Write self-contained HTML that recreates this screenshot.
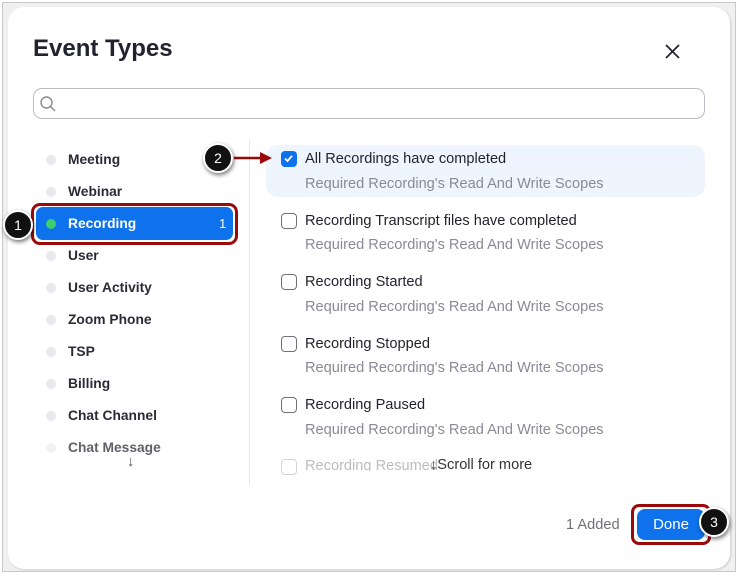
<!DOCTYPE html>
<html><head><style>
*{margin:0;padding:0;box-sizing:border-box}
body{width:738px;height:574px;background:#fff;font-family:"Liberation Sans",sans-serif;position:relative;overflow:hidden}
.frame{position:absolute;left:2px;top:2px;width:734px;height:570px;border:1px solid #c8c8c8;background:#f0f0f0}
.dlg{position:absolute;left:8px;top:7px;width:722px;height:562px;background:#fff;border-radius:16px;box-shadow:1px 1px 2px rgba(0,0,0,.15)}
.abs{position:absolute}
.title{left:33px;top:35px;font-size:24px;font-weight:bold;color:#23232f}
.search{left:33px;top:88px;width:672px;height:31px;border:1px solid #babac4;border-radius:9px}
.li{position:absolute;left:68px;font-size:13.8px;font-weight:bold;color:#2b2b36}
.dot{position:absolute;left:46px;width:10px;height:10px;border-radius:50%;background:#e8e8ed}
.sel{left:36px;top:207px;width:197px;height:33px;background:#0e72ed;border-radius:7px}
.selo{left:31px;top:203px;width:207px;height:42px;border:3px solid #9b0a0a;border-radius:9px}
.div{left:249px;top:140px;width:1px;height:345px;background:#e5e5ea}
.hl{left:266px;top:145px;width:439px;height:52px;background:#eef5fe;border-radius:12px}
.cb{position:absolute;left:281px;width:16px;height:16px;border:1.5px solid #70707c;border-radius:4px;background:#fff}
.t1{position:absolute;left:305px;font-size:14.6px;color:#23232f}
.t2{position:absolute;left:305px;font-size:14.6px;color:#8a8a97}
.call{position:absolute;width:30px;height:30px;border-radius:50%;background:#111;border:2px solid #fff;box-shadow:1px 2px 4px rgba(0,0,0,.55);color:#fff;font-size:14px;text-align:center;line-height:26px}
</style></head><body>
<div class="frame"></div>
<div class="dlg"></div>
<div class="abs title">Event Types</div>
<svg class="abs" style="left:664px;top:43px" width="17" height="17" viewBox="0 0 17 17"><path d="M2 2L15 15M15 2L2 15" stroke="#23232f" stroke-width="1.8"/></svg>
<div class="abs search"></div>
<svg class="abs" style="left:39px;top:95px" width="18" height="18" viewBox="0 0 18 18"><circle cx="7.5" cy="7.5" r="5.5" fill="none" stroke="#8a8a97" stroke-width="1.4"/><path d="M11.5 11.5L16 16" stroke="#8a8a97" stroke-width="1.4"/></svg>

<div class="dot" style="top:155px"></div><div class="li" style="top:152px">Meeting</div>
<div class="dot" style="top:187px"></div><div class="li" style="top:184px">Webinar</div>
<div class="abs selo"></div>
<div class="abs sel"></div>
<div class="dot" style="top:219px;background:#3ccf6e"></div><div class="li" style="top:216px;color:#fff">Recording</div>
<div class="abs" style="left:219px;top:216px;font-size:13px;color:#fff">1</div>
<div class="dot" style="top:251px"></div><div class="li" style="top:248px">User</div>
<div class="dot" style="top:283px"></div><div class="li" style="top:280px">User Activity</div>
<div class="dot" style="top:315px"></div><div class="li" style="top:312px">Zoom Phone</div>
<div class="dot" style="top:347px"></div><div class="li" style="top:344px">TSP</div>
<div class="dot" style="top:379px"></div><div class="li" style="top:376px">Billing</div>
<div class="dot" style="top:411px"></div><div class="li" style="top:408px">Chat Channel</div>
<div class="dot" style="top:443px;opacity:.6"></div><div class="li" style="top:440px;opacity:.75">Chat Message</div>
<div class="abs" style="left:127px;top:453px;font-size:15px;color:#555">↓</div>
<div class="abs div"></div>

<div class="abs hl"></div>
<div class="cb" style="top:151px;background:#0e72ed;border-color:#0e72ed"><svg width="13" height="13" viewBox="0 0 13 13" style="position:absolute;left:0;top:0"><path d="M3 6.5L5.5 9L10 3.8" fill="none" stroke="#fff" stroke-width="1.8"/></svg></div>
<div class="t1" style="top:151px">All Recordings have completed</div>
<div class="t2" style="top:176px">Required Recording's Read And Write Scopes</div>
<div class="cb" style="top:213px"></div>
<div class="t1" style="top:213px">Recording Transcript files have completed</div>
<div class="t2" style="top:237px">Required Recording's Read And Write Scopes</div>
<div class="cb" style="top:274px"></div>
<div class="t1" style="top:274px">Recording Started</div>
<div class="t2" style="top:299px">Required Recording's Read And Write Scopes</div>
<div class="cb" style="top:336px"></div>
<div class="t1" style="top:336px">Recording Stopped</div>
<div class="t2" style="top:360px">Required Recording's Read And Write Scopes</div>
<div class="cb" style="top:397px"></div>
<div class="t1" style="top:397px">Recording Paused</div>
<div class="t2" style="top:422px">Required Recording's Read And Write Scopes</div>
<div class="cb" style="top:459px;opacity:.3"></div>
<div class="t1" style="top:458px;opacity:.3;height:13px;overflow:hidden">Recording Resumed</div>
<div class="abs" style="left:430px;top:457px;font-size:14.6px;color:#333">↓Scroll for more</div>

<div class="abs" style="left:566px;top:517px;font-size:14.6px;color:#6e6e7a">1 Added</div>
<div class="abs" style="left:631px;top:504px;width:80px;height:41px;border:3px solid #9b0a0a;border-radius:8px"></div>
<div class="abs" style="left:637px;top:509px;width:68px;height:31px;background:#0e72ed;border-radius:8px;color:#fff;font-size:15px;text-align:center;line-height:31px">Done</div>

<svg class="abs" style="left:232px;top:151px" width="44" height="14" viewBox="0 0 44 14"><path d="M2 7H30" stroke="#9b0a0a" stroke-width="2.5"/><path d="M28 1L40 7L28 13Z" fill="#9b0a0a"/></svg>
<div class="call" style="left:3px;top:210px">1</div>
<div class="call" style="left:203px;top:143px">2</div>
<div class="call" style="left:699px;top:507px">3</div>
</body></html>
